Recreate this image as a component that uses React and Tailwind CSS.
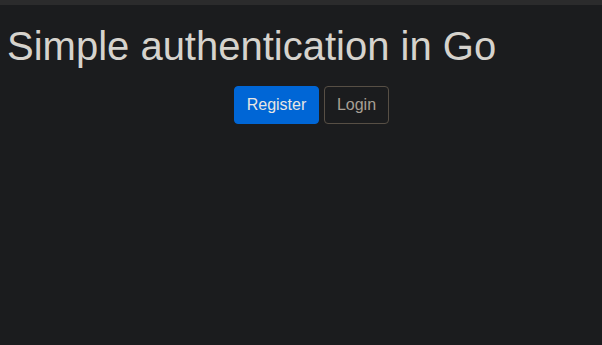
export default function App() {
  return (
    <div className="min-h-[345px] bg-[#1b1c1e] font-['Liberation_Sans',Arial,sans-serif]">
      <div className="h-[5px] bg-[#2b2b2c]" />
      <div className="px-2 pt-[17px]">
        <h1 className="-ml-px text-[40px] leading-[48px] text-[#d6d3cd]">Simple authentication in Go</h1>
        <div className="mt-4 flex gap-[5px] pl-[226px]">
          <button
            type="button"
            className="w-[85px] rounded-[4px] border border-[#0066d6] bg-[#0066d6] py-[6px] text-center text-base leading-6 text-[#e8e6e3]"
          >
            Register
          </button>
          <button
            type="button"
            className="w-[65px] rounded-[4px] border border-[#574f45] bg-transparent py-[6px] text-center text-base leading-6 text-[#a8a095]"
          >
            Login
          </button>
        </div>
      </div>
    </div>
  );
}
